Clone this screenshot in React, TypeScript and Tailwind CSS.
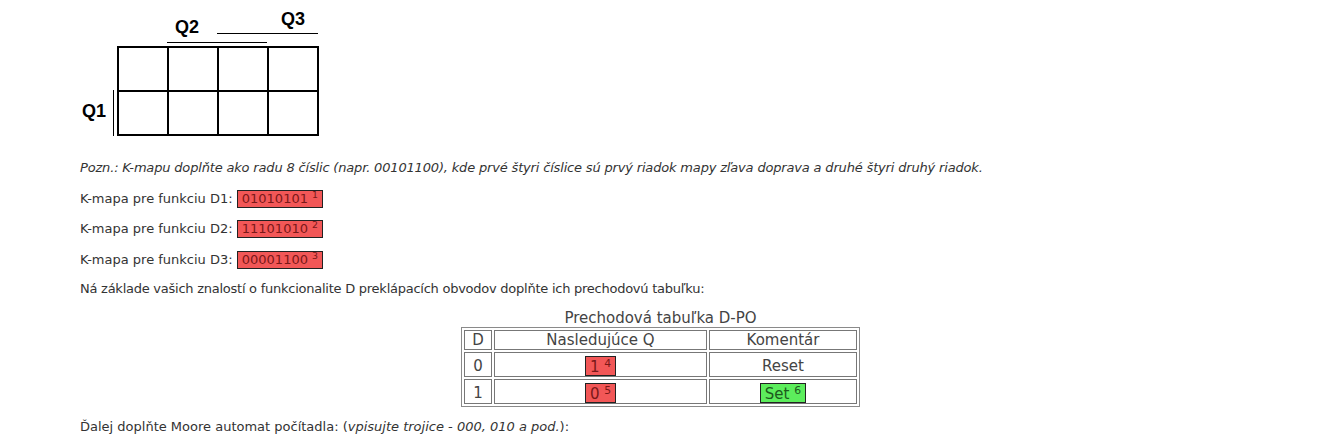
type AnswerProps = { value: string; n: number; ok?: boolean };

// vyplnená odpoveď (červená = zlá, zelená = dobrá)
function Answer({ value, n, ok }: AnswerProps) {
  return (
    <span
      className={
        ok
          ? 'inline-block border border-[#222] bg-[#5ced5c] text-[#1d5a1d] px-[4px] leading-[16px]'
          : 'inline-block border border-[#222] bg-[#f25757] text-[#7a1818] px-[4px] leading-[16px]'
      }
    >
      {value}&nbsp;<sup className="text-[0.72em]">{n}</sup>
    </span>
  );
}

// to isté, len v tabuľke je box o čosi vyšší
function CellAnswer({ value, n, ok }: AnswerProps) {
  return (
    <span
      className={
        ok
          ? 'inline-block align-middle border border-[#222] bg-[#5ced5c] text-[#1d5a1d] px-[4px] pt-[3px] leading-[15px]'
          : 'inline-block align-middle border border-[#222] bg-[#f25757] text-[#7a1818] px-[4px] pt-[3px] leading-[15px]'
      }
    >
      {value}&nbsp;<sup className="text-[0.72em]">{n}</sup>
    </span>
  );
}

function KMap() {
  return (
    <div className="relative h-[159px] font-['Liberation_Sans',Arial,sans-serif] font-bold text-[18px] text-black leading-none">
      {/* Q3 */}
      <span className="absolute left-[201px] top-[10px]">Q3</span>
      <div className="absolute left-[137px] top-[33px] w-[101px] h-px bg-black" />
      {/* Q2 */}
      <span className="absolute left-[95px] top-[18px]">Q2</span>
      <div className="absolute left-[87px] top-[42px] w-[100px] h-px bg-black" />
      {/* Q1 */}
      <span className="absolute left-[2px] top-[102px]">Q1</span>
      <div className="absolute left-[33px] top-[90px] w-px h-[46px] bg-black" />
      {/* mriežka */}
      <div className="absolute left-[37px] top-[46px] grid grid-cols-[repeat(4,48px)] grid-rows-[repeat(2,42px)] gap-[2px] p-[2px] bg-black">
        {Array.from({ length: 8 }).map((_, i) => (
          <div key={i} className="bg-white" />
        ))}
      </div>
    </div>
  );
}

export default function App() {
  return (
    <div className="min-h-[446px] bg-white text-[13px] text-[#333] font-['DejaVu_Sans',Verdana,sans-serif]">
      <div className="ml-[80px] w-[1161px]">
        <KMap />

        <p className="italic leading-[18px] tracking-[-0.17px]">
          Pozn.: K-mapu doplňte ako radu 8 číslic (napr. 00101100), kde prvé štyri číslice sú prvý riadok mapy zľava doprava a druhé štyri druhý riadok.
        </p>

        <p className="mt-[13px] leading-[18px]">
          K-mapa pre funkciu D1: <Answer value="01010101" n={1} />
        </p>
        <p className="mt-[12px] leading-[18px]">
          K-mapa pre funkciu D2: <Answer value="11101010" n={2} />
        </p>
        <p className="mt-[13px] leading-[18px]">
          K-mapa pre funkciu D3: <Answer value="00001100" n={3} />
        </p>

        <p className="mt-[11px] leading-[18px] tracking-[-0.25px]">
          Ná základe vašich znalostí o funkcionalite D preklápacích obvodov doplňte ich prechodovú tabuľku:
        </p>

        <table className="mt-[11px] mx-auto border-separate border-spacing-[2px] border border-[#8a8a8a] text-[15px] text-[#444] text-center">
          <caption className="leading-[18px] text-[#444]">Prechodová tabuľka D-PO</caption>
          <tbody>
            <tr>
              <th className="w-[28px] h-[20px] border border-[#777] font-normal p-0 leading-[18px]">D</th>
              <th className="w-[213px] h-[20px] border border-[#777] font-normal p-0 leading-[18px]">Nasledujúce Q</th>
              <th className="w-[148px] h-[20px] border border-[#777] font-normal p-0 leading-[18px]">Komentár</th>
            </tr>
            <tr>
              <td className="h-[25px] border border-[#777] px-0 pt-[3px] pb-0 leading-[18px]">0</td>
              <td className="h-[25px] border border-[#777] px-0 pt-[3px] pb-0 leading-[18px]">
                <CellAnswer value="1" n={4} />
              </td>
              <td className="h-[25px] border border-[#777] px-0 pt-[3px] pb-0 leading-[18px]">Reset</td>
            </tr>
            <tr>
              <td className="h-[25px] border border-[#777] px-0 pt-[3px] pb-0 leading-[18px]">1</td>
              <td className="h-[25px] border border-[#777] px-0 pt-[3px] pb-0 leading-[18px]">
                <CellAnswer value="0" n={5} />
              </td>
              <td className="h-[25px] border border-[#777] px-0 pt-[3px] pb-0 leading-[18px]">
                <CellAnswer value="Set" n={6} ok />
              </td>
            </tr>
          </tbody>
        </table>

        <p className="mt-[11px] leading-[18px]">
          Ďalej doplňte Moore automat počítadla: (<i>vpisujte trojice - 000, 010 a pod.</i>):
        </p>
      </div>
    </div>
  );
}
